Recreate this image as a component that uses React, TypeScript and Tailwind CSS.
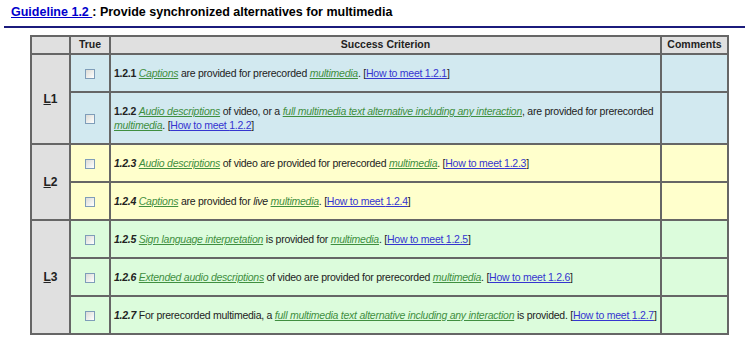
import React from 'react';

const G = ({ children }: { children: React.ReactNode }) => (
  <a className="italic text-[#3f8f3f] underline">{children}</a>
);

const H = ({ n }: { n: string }) => (
  <>
    [<a className="text-[#3535d0] underline">How to meet {n}</a>]
  </>
);

const Box = () => (
  <span className="inline-block h-[10px] w-[10px] border border-[#7f9db9] bg-gradient-to-br from-[#dcdcd7] to-white align-middle" />
);

const rowBg: Record<string, string> = {
  L1: 'bg-[#d2e9f0]',
  L2: 'bg-[#ffffcc]',
  L3: 'bg-[#dcfcdc]',
};

const rows: { level: string; h: string; body: React.ReactNode }[] = [
  {
    level: 'L1',
    h: 'h-[38px]',
    body: (
      <>
        <b>1.2.1</b> <G>Captions</G> are provided for prerecorded <G>multimedia</G>. <H n="1.2.1" />
      </>
    ),
  },
  {
    level: 'L1',
    h: 'h-[52px]',
    body: (
      <>
        <b>1.2.2</b> <G>Audio descriptions</G> of video, or a <G>full multimedia text alternative including any interaction</G>, are provided for prerecorded <G>multimedia</G>. <H n="1.2.2" />
      </>
    ),
  },
  {
    level: 'L2',
    h: 'h-[38px]',
    body: (
      <>
        <b className="italic">1.2.3</b> <G>Audio descriptions</G> of video are provided for prerecorded <G>multimedia</G>. <H n="1.2.3" />
      </>
    ),
  },
  {
    level: 'L2',
    h: 'h-[38px]',
    body: (
      <>
        <b className="italic">1.2.4</b> <G>Captions</G> are provided for <i>live</i> <G>multimedia</G>. <H n="1.2.4" />
      </>
    ),
  },
  {
    level: 'L3',
    h: 'h-[38px]',
    body: (
      <>
        <b className="italic">1.2.5</b> <G>Sign language interpretation</G> is provided for <G>multimedia</G>. <H n="1.2.5" />
      </>
    ),
  },
  {
    level: 'L3',
    h: 'h-[38px]',
    body: (
      <>
        <b className="italic">1.2.6</b> <G>Extended audio descriptions</G> of video are provided for prerecorded <G>multimedia</G>. <H n="1.2.6" />
      </>
    ),
  },
  {
    level: 'L3',
    h: 'h-[38px]',
    body: (
      <>
        <b className="italic">1.2.7</b> For prerecorded multimedia, a <G>full multimedia text alternative including any interaction</G> is provided. <H n="1.2.7" />
      </>
    ),
  },
];

const span: Record<string, number> = { L1: 2, L2: 2, L3: 3 };

export default function App() {
  const cell = 'border-2 border-[#666]';
  return (
    <div className="h-[339px] w-[750px] bg-white font-['Liberation_Sans',Arial,sans-serif] text-[11px] text-[#222]">
      <div className="px-[4px] pt-[4px]">
        <h2 className="pl-[7px] text-[12.5px] font-bold leading-[17px] text-black">
          <a className="text-[#0000cc] underline">Guideline 1.2 </a> : Provide synchronized alternatives for multimedia
        </h2>
        <div className="mt-[5px] h-[2px] w-[741px] bg-[#1b1b7c]" />
      </div>
      <table className="ml-[30px] mt-[7px] w-[697px] table-fixed border-collapse">
        <colgroup>
          <col className="w-[39px]" />
          <col className="w-[40px]" />
          <col className="w-[551px]" />
          <col className="w-[67px]" />
        </colgroup>
        <thead>
          <tr className="h-[17px] bg-[#e0e0e0] text-[10.5px] font-bold">
            <th className={cell}></th>
            <th className={cell}>True</th>
            <th className={cell}>Success Criterion</th>
            <th className={cell}>Comments</th>
          </tr>
        </thead>
        <tbody>
          {rows.map((r, i) => {
            const first = i === 0 || rows[i - 1].level !== r.level;
            return (
              <tr key={i} className={`${r.h} ${rowBg[r.level]}`}>
                {first && (
                  <td rowSpan={span[r.level]} className={`${cell} bg-[#e0e0e0] text-center text-[12px] font-bold`}>
                    <span className="underline">L</span>
                    {r.level.slice(1)}
                  </td>
                )}
                <td className={`${cell} text-center`}>
                  <Box />
                </td>
                <td className={`${cell} px-[3px] text-[10.5px] leading-[14px] tracking-[-0.25px]`}>{r.body}</td>
                <td className={cell}></td>
              </tr>
            );
          })}
        </tbody>
      </table>
    </div>
  );
}
